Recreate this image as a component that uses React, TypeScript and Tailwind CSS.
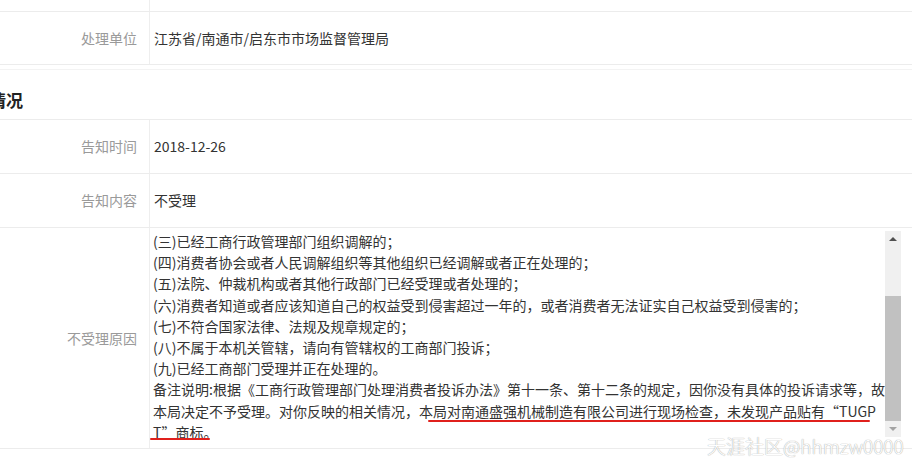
import React from "react";

const font = { fontFamily: '"Noto Sans CJK SC", "Noto Sans", sans-serif' };

function Row({ label, h, children }: { label: string; h: string; children?: React.ReactNode }) {
  return (
    <div className={`flex border-b border-[#ececec] ${h}`}>
      <div className="w-[150px] shrink-0 border-r border-[#eeeeee] flex items-center justify-end pr-[12px] text-[14px] text-[#9a9a9a]">
        {label}
      </div>
      <div className="flex-1 flex items-center pl-[4px] text-[14px] text-[#333333]">{children}</div>
    </div>
  );
}

const lines = [
  "(三)已经工商行政管理部门组织调解的；",
  "(四)消费者协会或者人民调解组织等其他组织已经调解或者正在处理的；",
  "(五)法院、仲裁机构或者其他行政部门已经受理或者处理的；",
  "(六)消费者知道或者应该知道自己的权益受到侵害超过一年的，或者消费者无法证实自己权益受到侵害的；",
  "(七)不符合国家法律、法规及规章规定的；",
  "(八)不属于本机关管辖，请向有管辖权的工商部门投诉；",
  "(九)已经工商部门受理并正在处理的。",
  "备注说明:根据《工商行政管理部门处理消费者投诉办法》第十一条、第十二条的规定，因你没有具体的投诉请求等，故",
  "本局决定不予受理。对你反映的相关情况，本局对南通盛强机械制造有限公司进行现场检查，未发现产品贴有“TUGP",
  "T”商标。",
];

export default function App() {
  return (
    <div className="relative w-[912px] h-[467px] overflow-hidden bg-white" style={font}>
      {/* tail of previous row */}
      <div className="flex h-[12px] border-b border-[#ececec]">
        <div className="w-[150px] border-r border-[#eeeeee]" />
      </div>
      <Row label="处理单位" h="h-[53px]">江苏省/南通市/启东市市场监督管理局</Row>
      <div className="h-[5px] border-b border-[#f3f3f3]" />
      <div className="h-[50px] border-b border-[#ececec] pt-[21px]">
        <div className="ml-[-11px] text-[17px] leading-[18px] font-bold text-[#222222]">情况</div>
      </div>
      <Row label="告知时间" h="h-[54px]">2018-12-26</Row>
      <Row label="告知内容" h="h-[54px]">不受理</Row>
      <div className="flex h-[221px] border-b border-[#ececec]">
        <div className="w-[150px] shrink-0 border-r border-[#eeeeee] flex items-center justify-end pr-[12px] text-[14px] text-[#9a9a9a]">
          不受理原因
        </div>
        <div className="flex-1 flex pt-[3px] pl-[3px] pr-[13px]">
          <div className="flex-1 text-[14px] leading-[21.2px] text-[#333333] whitespace-nowrap">
            {lines.map((l, i) => (
              <div key={i}>{l}</div>
            ))}
          </div>
          <div className="w-[16px] h-[206px] bg-[#f0f0f0] flex flex-col">
            <div className="h-[16px] flex items-center justify-center">
              <div className="w-0 h-0 border-l-[4px] border-r-[4px] border-b-[4px] border-l-transparent border-r-transparent border-b-[#505050]" />
            </div>
            <div className="h-[49px]" />
            <div className="h-[125px] bg-[#c1c1c1]" />
            <div className="h-[16px] flex items-center justify-center">
              <div className="w-0 h-0 border-l-[4px] border-r-[4px] border-t-[4px] border-l-transparent border-r-transparent border-t-[#a3a3a3]" />
            </div>
          </div>
        </div>
      </div>

      {/* red annotation underlines */}
      <div className="absolute left-[428px] top-[420px] w-[442px] h-[2px] bg-[#e0201c] rounded-full" />
      <div className="absolute left-[150px] top-[438px] w-[60px] h-[2px] bg-[#e0201c] rounded-full" />

      {/* watermark */}
      <div
        className="absolute left-[707px] top-[434px] text-[19px] leading-[24px] text-white whitespace-nowrap [text-shadow:0_0_1px_#b0b0b0,0_0_1px_#b0b0b0]"
        style={{ fontFamily: '"Noto Sans CJK SC", "DejaVu Sans", sans-serif', fontWeight: 300 }}
      >
        天涯社区@hhmzw0000
      </div>
    </div>
  );
}
